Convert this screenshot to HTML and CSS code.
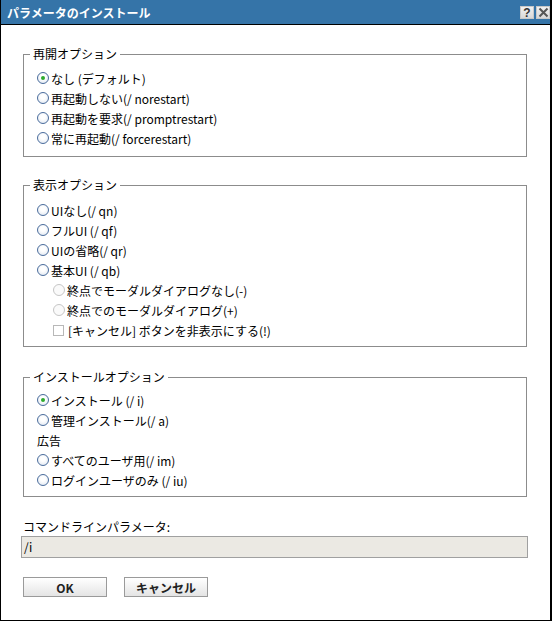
FILE: index.html
```html
<!DOCTYPE html>
<html lang="ja">
<head>
<meta charset="utf-8">
<title>パラメータのインストール</title>
<link rel="stylesheet" href="styles.css">
</head>
<body>
<div class="dialog">
  <div class="titlebar">
    <span class="title">パラメータのインストール</span>
    <div class="tb-buttons">
      <span class="tb-btn">?</span>
      <span class="tb-btn">
        <svg width="11" height="11" viewBox="0 0 11 11"><path d="M1.5 1.5 L9.5 9.5 M9.5 1.5 L1.5 9.5" stroke="#555" stroke-width="2"/></svg>
      </span>
    </div>
  </div>
  <div class="content">
    <fieldset class="group g1">
      <legend>再開オプション</legend>
      <div class="opt"><span class="radio checked"></span>なし (デフォルト)</div>
      <div class="opt"><span class="radio"></span>再起動しない(/ norestart)</div>
      <div class="opt"><span class="radio"></span>再起動を要求(/ promptrestart)</div>
      <div class="opt"><span class="radio"></span>常に再起動(/ forcerestart)</div>
    </fieldset>
    <fieldset class="group g2">
      <legend>表示オプション</legend>
      <div class="opt"><span class="radio"></span>UIなし(/ qn)</div>
      <div class="opt"><span class="radio"></span>フルUI (/ qf)</div>
      <div class="opt"><span class="radio"></span>UIの省略(/ qr)</div>
      <div class="opt"><span class="radio"></span>基本UI (/ qb)</div>
      <div class="opt sub"><span class="radio disabled"></span>終点でモーダルダイアログなし(-)</div>
      <div class="opt sub"><span class="radio disabled"></span>終点でのモーダルダイアログ(+)</div>
      <div class="opt sub"><span class="check"></span>[キャンセル] ボタンを非表示にする(!)</div>
    </fieldset>
    <fieldset class="group g3">
      <legend>インストールオプション</legend>
      <div class="opt"><span class="radio checked"></span>インストール (/ i)</div>
      <div class="opt"><span class="radio"></span>管理インストール(/ a)</div>
      <div class="opt label">広告</div>
      <div class="opt"><span class="radio"></span>すべてのユーザ用(/ im)</div>
      <div class="opt"><span class="radio"></span>ログインユーザのみ (/ iu)</div>
    </fieldset>
    <div class="cmd">
      <div class="cmd-label">コマンドラインパラメータ:</div>
      <div class="cmd-input">/i</div>
    </div>
    <div class="buttons">
      <span class="btn">OK</span>
      <span class="btn">キャンセル</span>
    </div>
  </div>
</div>
</body>
</html>
```
FILE: styles.css
```css
html, body {
  margin: 0;
  padding: 0;
  background: #fff;
}
body {
  font-family: "Noto Sans CJK JP", "Liberation Sans", sans-serif;
  font-size: 12px;
  color: #000;
}
.dialog {
  width: 552px;
  height: 621px;
  box-sizing: border-box;
  border: 1px solid #000;
  border-top: none;
  border-right-width: 2px;
  background: #fff;
}
.titlebar {
  height: 24px;
  background: #3574a8;
  border-bottom: 1px solid #000;
  display: flex;
  align-items: center;
  justify-content: space-between;
  padding: 0 0 0 6px;
}
.title {
  color: #fff;
  font-weight: bold;
  font-size: 12px;
}
.tb-buttons {
  display: flex;
  gap: 2px;
  margin-top: 1px;
}
.tb-btn {
  width: 14px;
  height: 13px;
  background: linear-gradient(#f2f2f2, #d8d8d8);
  border: 1px solid #c8c8c8;
  box-sizing: border-box;
  display: flex;
  align-items: center;
  justify-content: center;
  font-family: "Liberation Sans", sans-serif;
  font-weight: bold;
  font-size: 12px;
  color: #333;
  line-height: 1;
}
.content {
  padding: 0 23px 0 22px;
}
.group {
  margin: 21px 0 0 0;
  padding: 6px 10px 8px 13px;
  border: 1px solid #8c8c8c;
}
.g2 {
  margin-top: 20px;
  padding-top: 7px;
  padding-bottom: 6px;
}
.g3 {
  margin-top: 22px;
  padding-top: 5px;
  padding-bottom: 6px;
}
.group legend {
  padding: 0 3px;
  margin-left: -7px;
  line-height: 16px;
}
.opt {
  height: 20px;
  display: flex;
  align-items: center;
  white-space: nowrap;
}
.opt.sub {
  padding-left: 16px;
}
.radio {
  width: 10px;
  height: 10px;
  border: 1px solid #4a6c9c;
  border-radius: 50%;
  background: radial-gradient(circle at 50% 40%, #ffffff 30%, #d9e2ee 100%);
  margin-right: 2px;
  position: relative;
  flex: none;
}
.radio.checked::after {
  content: "";
  position: absolute;
  left: 3px;
  top: 3px;
  width: 4px;
  height: 4px;
  border-radius: 50%;
  background: #2eaa2e;
}
.radio.disabled {
  border-color: #c6c6c6;
  background: #fafafa;
}
.check {
  width: 9px;
  height: 9px;
  border: 1px solid #b8b8b8;
  margin-right: 4px;
  flex: none;
  background: #fff;
}
.cmd {
  margin-top: 22px;
}
.cmd-label {
  line-height: 16px;
}
.cmd-input {
  margin-top: 1px;
  height: 22px;
  box-sizing: border-box;
  border: 1px solid #a0a0a0;
  background: #ebe9e3;
  padding: 0 2px;
  line-height: 20px;
  margin-left: -2px;
  margin-right: -1px;
}
.buttons {
  display: flex;
  gap: 17px;
  margin-top: 19px;
}
.btn {
  width: 84px;
  height: 20px;
  box-sizing: border-box;
  border: 1px solid #9a9a9a;
  background: linear-gradient(#ffffff, #e4e4e4);
  display: flex;
  align-items: center;
  justify-content: center;
  font-weight: bold;
  font-size: 12px;
  color: #222;
}
```
